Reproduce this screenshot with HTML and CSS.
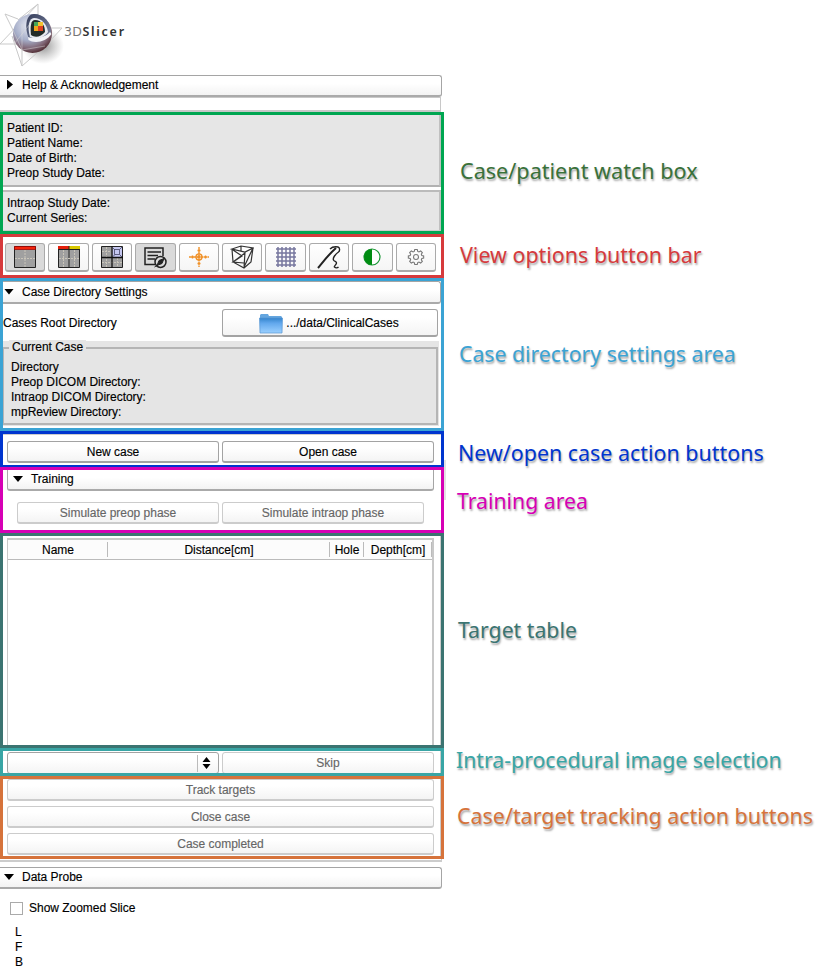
FILE: index.html
```html
<!DOCTYPE html>
<html lang="en">
<head>
<meta charset="utf-8">
<title>3DSlicer</title>
<link rel="stylesheet" href="styles.css">
</head>
<body>
<header class="logo">
  <svg width="64" height="72" viewBox="0 0 64 72">
    <defs>
      <radialGradient id="ball" cx=".4" cy=".3" r=".75"><stop offset="0" stop-color="#e8ebf5"/><stop offset=".5" stop-color="#a5adc8"/><stop offset=".78" stop-color="#806675"/><stop offset="1" stop-color="#452025"/></radialGradient>
      <radialGradient id="shade"><stop offset="0" stop-color="#777" stop-opacity=".8"/><stop offset="1" stop-color="#999" stop-opacity="0"/></radialGradient>
      <linearGradient id="rim" x1="0" y1="0" x2="1" y2="1"><stop offset="0" stop-color="#343c58"/><stop offset="1" stop-color="#818ba9"/></linearGradient>
    </defs>
    <ellipse cx="43" cy="46" rx="21" ry="18" fill="url(#shade)"/>
    <g fill="none" stroke="#c9c9c9" stroke-width="1"><path d="M38 4 0 44 18 44M38 4v12M5 14 18 19M5 14 13 30M46 28H62L50 41M22 50V66L45 46M22 66 12 36M18 20 38 4"/></g>
    <circle cx="32.500" cy="33.500" r="19.500" fill="url(#ball)"/>
    <path d="M29 39C24 27 26 14 34 14c10 0 17 8 17 19-5 6-15 8-22 6z" fill="url(#rim)"/>
    <path d="M30 37c-3-10-1-19 4-19 7 0 13 6 14 14-4 6-12 8-18 5z" fill="#e7eaf1"/>
    <path d="M31 35c-1-9 0-15 4-15 7 0 10 6 10 12-4 5-10 6-14 3z" fill="#222b28"/>
    <path d="M34 22h4v4h-4z" fill="#46a657"/><path d="M38 22h5v4h-5z" fill="#f1c232"/><path d="M34 26h4v5h-4z" fill="#f0a51c"/><path d="M38 26h5v5h-5z" fill="#df4322"/>
    <path d="M28 37c6 2 17 1 22-5l1.500 2c-5 8-17 10-23 6z" fill="#f2f3f8"/>
    <path d="M13 30 22 50M22 24v26L45 46M14 44 30 24" fill="none" stroke="#ddd" stroke-opacity=".45"/>
  </svg>
  <span class="brand">3D<b>Slicer</b></span>
</header>

<div class="bar help"><i class="tri right"></i>Help &amp; Acknowledgement</div>
<div class="strip"></div>

<div class="row">
  <section class="frame watch">
    <div class="info first">Patient ID:<br>Patient Name:<br>Date of Birth:<br>Preop Study Date:</div>
    <div class="info second">Intraop Study Date:<br>Current Series:</div>
  </section>
  <div class="note n-watch"><span>Case/patient watch box</span></div>
</div>

<div class="row">
  <section class="frame views">
    <button class="on"><svg viewBox="0 0 24 24"><path fill="#a0a0a0" stroke="#222" d="M1.5 1.5h21v21h-21z"/><path fill="#f2240c" stroke="#900" stroke-width=".7" d="M1.5 1.5h21v3h-21z"/><path d="M12 5v17M2 13.500h20" stroke="#c9c5ba" stroke-dasharray="2 1"/></svg></button>
    <button><svg viewBox="0 0 24 24"><path fill="#a0a0a0" stroke="#222" d="M1.500 1.500h21v21h-21z"/><path fill="#e5200c" d="M1 1h11v3H1z"/><path fill="#d8c800" d="M12 1h11v3H12z"/><path d="M1 4.500h22M12 1v22" stroke="#222"/><path d="M6.500 5v17M17.500 5v17M2 13.500h20" stroke="#c9c5ba" stroke-dasharray="2 1"/></svg></button>
    <button><svg viewBox="0 0 24 24"><path fill="#a0a0a0" stroke="#222" d="M1.500 1.500h21v21h-21z"/><path d="M6.500 2v20M17.500 13v9M2 6.500h9M2 17.500h20" stroke="#c9c5ba" stroke-dasharray="2 1"/><path fill="#c5c7f0" d="M12.500 2H22v10h-9.500z"/><path d="M14.500 4.500h5v5h-5zM13 3l2 2M22 2l-2.500 2.500M13 11.500l2-2M22 12l-2.500-2.500" fill="none" stroke="#446" stroke-width=".8"/><path d="M12 1v22M1 12.500h22" stroke="#111" stroke-width="1.300"/></svg></button>
    <button class="on"><svg viewBox="0 0 24 24" fill="none" stroke="#222" stroke-width="1.500"><path d="M12 19.500H2V3h18v8M4.500 7H18M4.500 10.500H15M4.500 14H12"/><circle cx="17.500" cy="17" r="5.500"/><path fill="#222" stroke-width="1" d="M14 20.500l2-5 5-2-2 5zM11.500 22l3-2"/></svg></button>
    <button><svg viewBox="0 0 24 24" fill="none" stroke="#f09128" stroke-width="1.400"><path d="M12 2.500v19M2.500 12h19M12 2v5M12 17v5M2 12h5M17 12h5" stroke-dasharray="3 .7"/><circle cx="12" cy="12" r="3"/><path d="M10.500 5.500h3M10.500 18.500h3M5.500 10.500v3M18.500 10.500v3"/><circle cx="12" cy="12" r="1"/></svg></button>
    <button><svg viewBox="0 0 24 24" fill="none" stroke="#333" stroke-width="1.200"><path d="M2 4 11 1l12 2-8 4zM2 4l1 13 11 6 7-6 2-14M15 7l-1 16M2 4l13 3M3 17 15 8M3 5l9 6-9 6 11 1M11 1v5M23 3l-9 19"/></svg></button>
    <button><svg viewBox="0 0 24 24" fill="none" stroke="#77779f" stroke-width="1.500"><path d="M4 2v20M8 2v20M12 2v20M16 2v20M20 2v20M2 4h20M2 8h20M2 12h20M2 16h20M2 20h20"/></svg></button>
    <button><svg viewBox="0 0 24 24" fill="none" stroke="#222"><path d="M1 23C6 17 11 10 19 3" stroke-width="2"/><path d="M13 4c2-2 5-2.500 8-2 2 .500 2 4 .500 5-3 2-6 6-5 8s3 1 3 3-3 3-2 4 3 1 4 0" stroke-width="1.400"/></svg></button>
    <button><svg viewBox="0 0 24 24"><circle cx="12" cy="12" r="8" fill="#fff" stroke="#159432" stroke-width="1.200"/><path fill="#008c12" d="M12 4a8 8 0 0 0 0 16z"/></svg></button>
    <button><svg class="gear" viewBox="0 0 24 24" fill="none" stroke="#777" stroke-width="1.300"><path d="M10.500 3h3l.6 2.300 1.400.6 2.100-1.200 2 2-1.200 2.100.6 1.400 2.200.6v2.400l-2.200.6-.6 1.400 1.200 2.100-2 2-2.100-1.200-1.400.6-.6 2.200h-3l-.6-2.200-1.400-.6-2.100 1.200-2-2 1.200-2.100-.6-1.400-2.200-.6v-2.400l2.200-.6.6-1.400-1.200-2.100 2-2 2.100 1.200 1.400-.6z"/><circle cx="12" cy="12" r="3"/></svg></button>
  </section>
  <div class="note n-views"><span>View options button bar</span></div>
</div>

<div class="row">
  <section class="frame cases">
    <div class="bar inner"><i class="tri"></i>Case Directory Settings</div>
    <div class="root"><span>Cases Root Directory</span>
      <div class="btn path"><svg width="24" height="21" viewBox="0 0 24 21"><defs><linearGradient id="folder" x2="0" y2="1"><stop stop-color="#3484cc"/><stop offset=".35" stop-color="#62a8ed"/><stop offset="1" stop-color="#9bd0ff"/></linearGradient></defs><path fill="#65a6df" d="M1 4V2l1-1h7l1 2h12l1 1v5H1z"/><path fill="url(#folder)" stroke="#5797d2" stroke-width=".7" d="M.500 5h23l-.5 15H1z"/></svg>.../data/ClinicalCases</div>
    </div>
    <div class="current"><div class="group"><span class="legend">Current Case</span>Directory<br>Preop DICOM Directory:<br>Intraop DICOM Directory:<br>mpReview Directory:</div></div>
  </section>
  <div class="note n-cases"><span>Case directory settings area</span></div>
</div>

<div class="row">
  <section class="frame actions"><div class="btn">New case</div><div class="btn">Open case</div></section>
  <div class="note n-actions"><span>New/open case action buttons</span></div>
</div>

<div class="row">
  <section class="frame training">
    <div class="bar nested"><i class="tri"></i>Training</div>
    <div class="pair"><div class="btn off">Simulate preop phase</div><div class="btn off">Simulate intraop phase</div></div>
  </section>
  <div class="note n-training"><span>Training area</span></div>
</div>

<div class="row">
  <section class="frame targets"><div class="table"><div class="thead"><span>Name</span><span>Distance[cm]</span><span>Hole</span><span>Depth[cm]</span></div></div></section>
  <div class="note n-targets"><span>Target table</span></div>
</div>

<div class="row">
  <section class="frame selection">
    <div class="btn combo"><svg width="22" height="20" viewBox="0 0 22 20"><path stroke="#bbb" d="M1.500 2v17"/><path d="M6.500 9h8l-4-5zM6.500 11h8l-4 5z"/></svg></div><div class="btn off">Skip</div>
  </section>
  <div class="note n-selection"><span>Intra-procedural image selection</span></div>
</div>

<div class="row">
  <section class="frame tracking"><div class="btn off">Track targets</div><div class="btn off">Close case</div><div class="btn off">Case completed</div></section>
  <div class="note n-tracking"><span>Case/target tracking action buttons</span></div>
</div>

<div class="panel-end"></div>
<div class="bar probe"><i class="tri"></i>Data Probe</div>
<label class="zoomed"><i class="check"></i>Show Zoomed Slice</label>
<div class="axes">L<br>F<br>B</div>
</body>
</html>
```
FILE: styles.css
```css
* { box-sizing: border-box; }
body { margin: 0; width: 827px; height: 972px; overflow: hidden; background: #fff; color: #000; font: 12px/15px "Liberation Sans", Arial, sans-serif; letter-spacing: -.02px; -webkit-text-stroke: .15px; }
.logo { height: 75px; display: flex; align-items: flex-start; }
.logo svg { flex: none; }
.brand { margin-top: 24px; font: 12.5px/16px "DejaVu Sans", sans-serif; letter-spacing: .4px; color: #777; -webkit-text-stroke: 0; }
.brand b { color: #333; font-weight: 600; font-family: "Noto Sans", sans-serif; letter-spacing: 1.75px; }
.bar { display: flex; align-items: center; width: 442px; height: 22px; padding: 0 0 0 5px; border: 1px solid #a5a5a5; border-bottom: 2px solid #aaa; border-left: 0; border-radius: 0 3px 3px 0; background: linear-gradient(#fff 40%, #f3f3f3); }
.bar.help { padding-bottom: 1px; }
.tri { flex: none; width: 10px; height: 6px; margin: -1px 8px 0 -1px; background: #000; clip-path: polygon(0 0, 100% 0, 50% 100%); }
.tri.right { width: 6px; height: 10px; margin: -1px 9px 0 2px; clip-path: polygon(0 0, 100% 50%, 0 100%); }
.strip { width: 441px; height: 15px; border: solid #c8c8c8; border-width: 1px 1px 2px 0; }
.row { display: flex; align-items: flex-start; }
.frame { flex: none; width: 444px; border: 3px solid; position: relative; }
.watch { height: 122px; border-color: #00a651; }
.info { width: 438px; background: #e6e6e6; padding-left: 4px; border-right: 2px solid #c0c0c0; }
.first { height: 72px; padding-top: 6px; border-bottom: 2px solid #b2b2b2; }
.second { height: 41px; margin-top: 3px; padding-top: 4px; border-top: 2px solid #bbb; border-bottom: 1px solid #ccc; }
.views { display: grid; grid-template-columns: repeat(10, 1fr); gap: 3px; height: 44px; padding: 6px 5px 3px 2px; border-color: #d63a3c; }
.views button { display: grid; place-items: center; min-width: 0; height: 29px; padding: 0; border: 1px solid #aaa; border-bottom-width: 2px; border-radius: 3px; background: linear-gradient(#fff, #f5f5f5); }
.views .on { background: #dadada; }
.views svg { width: 24px; height: 24px; display: block; }
.views .gear { width: 20px; height: 20px; }
.cases { height: 153px; border-color: #3ba3d4; }
.bar.inner { width: 438px; height: 23px; padding: 0 0 0 2px; }
.root { display: flex; justify-content: space-between; align-items: center; height: 28px; margin: 5px 3px 4px 0; }
.btn { display: flex; align-items: center; justify-content: center; height: 22px; padding-top: 1px; border: 1px solid #a3a3a3; border-bottom-width: 2px; border-radius: 3px; background: linear-gradient(#fff 30%, #f4f4f4); }
.btn.off { color: #666; border-color: #ccc; }
.path { width: 216px; height: 28px; gap: 3px; padding-right: 2px; }
.current { width: 436px; height: 85px; padding: 6px 1px 1px 0; background: #e5e5e5; }
.group { position: relative; height: 78px; padding: 11px 0 0 7px; border: 2px solid #b5b5b5; border-left-width: 1px; }
.legend { position: absolute; left: 5px; top: -9px; padding: 0 3px; background: #e5e5e5; }
.actions { height: 36px; display: grid; grid-template-columns: 1fr 1fr; gap: 3px; padding: 7px 7px 0 4px; border-color: #0035cf; border-bottom-width: 2px; box-shadow: inset 0 1px #ccc; }
.training { height: 66px; padding: 0 7px 0 4px; border-color: #d600b5; }
.training::after { content: ""; position: absolute; left: 441px; top: -10px; width: 2px; height: 40px; background: #e2e2e2; }
.bar.nested { width: 427px; height: 21px; padding: 0 0 0 6px; border-left: 1px solid #aaa; border-top: 0; border-radius: 0 0 3px 3px; }
.pair { display: grid; grid-template-columns: 1fr 1fr; gap: 3px; margin: 11px 10px 0; }
.pair .btn { padding-top: 2px; }
.targets { height: 215px; padding: 2px 7px 0 4px; border-color: #3b7471; box-shadow: inset -1px 0 #ccc; }
.table { width: 427px; height: 207px; border: solid #c8c8c8; border-width: 2px 2px 0 1px; }
.thead { display: grid; grid-template-columns: 100px 222px 34px 68px; height: 20px; padding-top: 2px; border-bottom: 1px solid #bbb; background: #fcfcfc; text-align: center; }
.thead span { height: 15px; border-right: 1px solid #bbb; padding-left: 1px; line-height: 17px; white-space: nowrap; }
.selection { height: 28px; display: grid; grid-template-columns: 1fr 1fr; gap: 3px; padding: 1px 7px 0 4px; border-color: #39a5a5; box-shadow: inset -1px 0 #ccc; overflow: hidden; }
.selection .btn { border-bottom-width: 1px; padding-top: 0; }
.combo { justify-content: flex-end; }
.tracking { height: 83px; padding: 0 7px 0 4px; display: flex; flex-direction: column; gap: 5px; border-color: #d6733b; box-shadow: inset -1px 0 #ccc; }
.tracking .btn { padding-top: 2px; }
.panel-end { width: 442px; height: 3px; margin-bottom: 5px; border-bottom: 2px solid #ccc; border-right: 1px solid #ccc; }
.probe { height: 22px; }
.zoomed { display: flex; align-items: center; gap: 6px; height: 15px; margin: 12px 0 0 10px; }
.check { width: 13px; height: 13px; border: 1px solid #aaa; }
.axes { margin: 9px 0 0 15px; }
.note { font: 22px/28px "Noto Sans", sans-serif; letter-spacing: 0; white-space: nowrap; text-shadow: 1px 2px 2px rgba(0,0,0,.35); -webkit-text-stroke: 0; }
.note span { display: block; transform: scaleX(.965); transform-origin: left; }
.note.n-watch span { transform: scaleX(.982); }
.note.n-views span, .note.n-actions span, .note.n-tracking span { transform: scaleX(.974); }
.n-watch { margin: 44px 0 0 16px; color: #39713a; }
.n-views { margin: 6px 0 0 16px; color: #d63a3c; }
.n-cases { margin: 61px 0 0 15px; color: #3ba3d4; }
.n-actions { margin: 7px 0 0 14px; color: #0035cf; }
.n-training { margin: 19px 0 0 13px; color: #d600b5; }
.n-targets { margin: 82px 0 0 14px; color: #3b7471; }
.n-selection { margin: -3px 0 0 12px; height: 28px; color: #39a5a5; }
.n-tracking { margin: 25px 0 0 13px; color: #d6733b; }
```
